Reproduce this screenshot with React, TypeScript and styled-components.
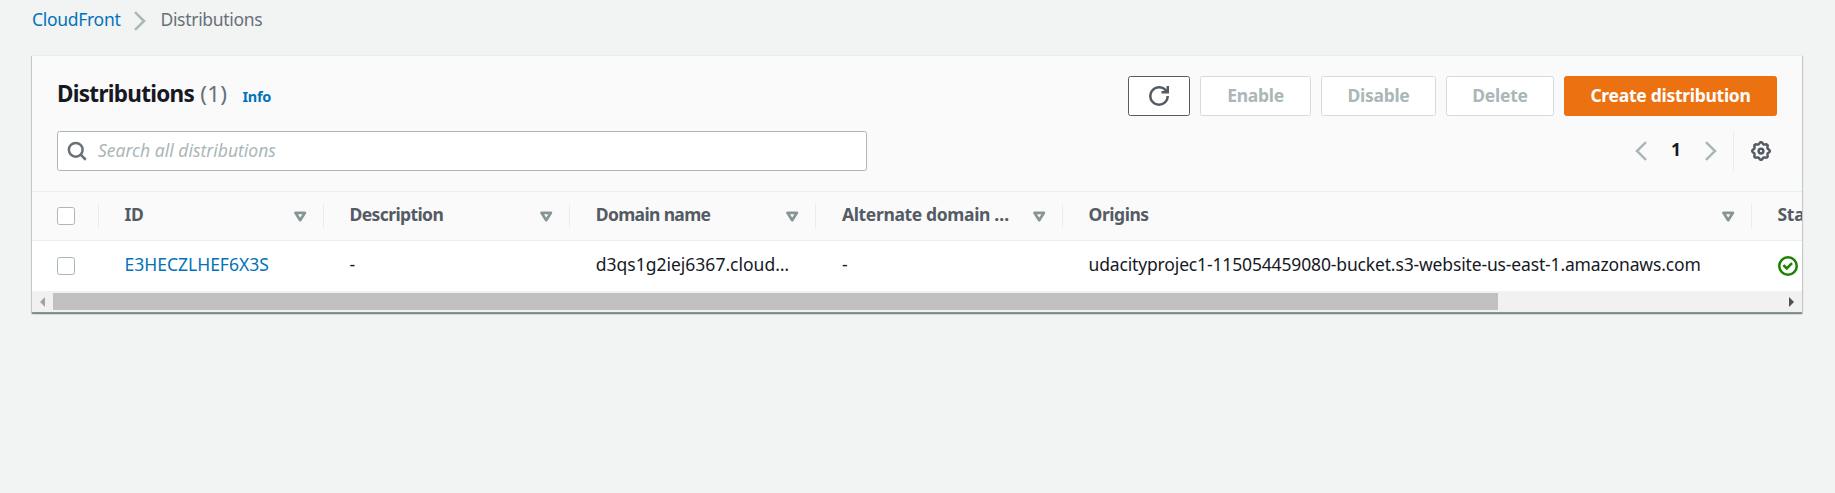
import React from "react";
import styled, { createGlobalStyle, css } from "styled-components";

const GlobalStyle = createGlobalStyle`
  *, *::before, *::after { box-sizing: border-box; }
  body {
    margin: 0;
    background: #f2f3f3;
    color: #16191f;
    font-family: "Noto Sans", "Open Sans", sans-serif;
    font-size: 17.5px;
    line-height: 27.5px;
  }
`;

const Page = styled.div`
  display: flex;
  flex-direction: column;
  gap: 21px;
  padding: 6px 33px 0 32px;
  min-height: 493px;
  background: #f2f3f3;
`;

const Breadcrumbs = styled.nav`
  display: flex;
  align-items: center;
  height: 28px;
  letter-spacing: -0.3px;

  svg { margin: 1px 14px 0 14px; }
`;

const Link = styled.a<{ $tracking?: number }>`
  color: #0073bb;
  text-decoration: none;
  letter-spacing: ${(p) => p.$tracking ?? 0}px;
`;

const Crumb = styled.span`
  color: #687078;
`;

const Panel = styled.section`
  display: flex;
  flex-direction: column;
  width: 1770px;
  height: 258px;
  background: #fff;
  box-shadow: 0 1px 1px 0 rgba(0, 28, 36, 0.3), 1px 1px 1px 0 rgba(0, 28, 36, 0.15),
    -1px 1px 1px 0 rgba(0, 28, 36, 0.15);
  border-bottom: 1px solid #879596;
  border-top: 1px solid #eaeded;
`;

const PanelHeader = styled.header`
  display: flex;
  flex-direction: column;
  gap: 15px;
  height: 135px;
  padding: 20px 25px 0;
  background: #fafafa;
`;

const HeaderRow = styled.div`
  display: flex;
  align-items: center;
  justify-content: space-between;
  height: 40px;
`;

const TitleGroup = styled.div`
  display: flex;
  align-items: baseline;
  gap: 15px;
  margin-top: -2px;
`;

const Title = styled.h2`
  margin: 0;
  font-size: 22.5px;
  font-weight: 700;
  line-height: 30px;
  letter-spacing: -0.72px;
`;

const Counter = styled.span`
  color: #687078;
  font-weight: 400;
  letter-spacing: 0.3px;
  margin-left: 1px;
`;

const InfoLink = styled.a`
  color: #0073bb;
  font-size: 14.5px;
  font-weight: 700;
  letter-spacing: -0.3px;
`;

const Actions = styled.div`
  display: flex;
  gap: 10px;
`;

const Button = styled.button<{ $variant?: "normal" | "primary"; $width: number }>`
  display: flex;
  align-items: center;
  justify-content: center;
  width: ${(p) => p.$width}px;
  height: 40px;
  padding: 0 0 2px;
  border: 1px solid #545b64;
  border-radius: 2.5px;
  background: #fff;
  color: #545b64;
  font: 700 17.5px/25px "Noto Sans", sans-serif;
  letter-spacing: -0.28px;

  svg { margin-top: 2px; }

  &:disabled {
    border-color: #d5dbdb;
    color: #aab7b8;
  }

  ${(p) =>
    p.$variant === "primary" &&
    css`
      border-color: #ec7211;
      background: #ec7211;
      color: #fff;
    `}
`;

const SearchBox = styled.label`
  display: flex;
  align-items: center;
  gap: 11px;
  width: 810px;
  height: 40px;
  padding: 0 9px;
  border: 1px solid #aab7b8;
  border-radius: 2.5px;
  background: #fff;
`;

const SearchInput = styled.input`
  flex: 1;
  padding: 0;
  margin-top: -2px;
  border: 0;
  outline: 0;
  background: transparent;
  font: 17.5px/25px "Noto Sans", sans-serif;

  &::placeholder {
    color: #aab7b8;
    font-style: italic;
    opacity: 1;
  }
`;

const Tools = styled.div`
  display: flex;
  align-items: center;
  height: 40px;
`;

const Pagination = styled.div`
  display: flex;
  align-items: center;
  gap: 24px;
  padding-right: 16px;
`;

const PageNumber = styled.span`
  width: 10px;
  margin-top: -3px;
  text-align: center;
  font-weight: 700;
`;

const Preferences = styled.div`
  display: flex;
  align-items: center;
  height: 40px;
  padding: 0 6px 0 17px;
  border-left: 1px solid #eaeded;
`;

const Table = styled.div`
  width: 1770px;
  overflow: hidden;
`;

const Row = styled.div<{ $head?: boolean }>`
  display: grid;
  grid-template-columns: 66.5px 225px 246.25px 246.25px 246.5px 689px 225px;
  align-items: center;
  width: 1945px;
  height: 50px;

  ${(p) =>
    p.$head &&
    css`
      background: #fafafa;
      border-top: 1px solid #eaeded;
      border-bottom: 1px solid #eaeded;
      color: #545b64;
      font-weight: 700;
    `}
`;

const HeadCell = styled.div`
  display: flex;
  align-items: center;
  justify-content: space-between;
  height: 24px;
  padding: 0 16px 0 26px;
  border-right: 1px solid #eaeded;
`;

const SelectCell = styled.div<{ $divided?: boolean }>`
  display: flex;
  align-items: center;
  height: 24px;
  padding-left: 25px;
  border-right: ${(p) => (p.$divided ? "1px solid #eaeded" : "0")};
`;

const Cell = styled.div`
  display: flex;
  align-items: center;
  padding: 0 26px;
  white-space: nowrap;
`;

const Label = styled.span<{ $tracking?: number }>`
  display: block;
  margin-top: -3px;
  white-space: nowrap;
  letter-spacing: ${(p) => p.$tracking ?? 0}px;
`;

const Checkbox = styled.input`
  appearance: none;
  width: 18px;
  height: 18px;
  margin: 0;
  border: 1px solid #aab7b8;
  border-radius: 2.5px;
  background: #fff;
`;

const ScrollTrack = styled.div`
  display: flex;
  align-items: center;
  height: 21px;
  padding: 0 8px;
  background: #f1f1f1;
`;

const ScrollThumb = styled.div`
  width: 1445px;
  height: 17px;
  margin: 0 auto 0 8px;
  background: #c1c1c1;
`;

const Chevron = ({ left = false }: { left?: boolean }) => (
  <svg width="12" height="20" viewBox="0 0 12 20" fill="none" stroke="#aab7b8" strokeWidth="2.5">
    <path d={left ? "M11 1.2 L2 10 L11 18.8" : "M1 1.2 L10 10 L1 18.8"} />
  </svg>
);

const SortIcon = () => (
  <svg width="13" height="11" viewBox="0 0 13 11" fill="none" stroke="#879596" strokeWidth="2.7" strokeLinejoin="round">
    <path d="M1.5 1.8H10.9L6.2 9.2Z" />
  </svg>
);

const RefreshIcon = () => (
  <svg width="20" height="20" viewBox="0 0 16 16" fill="none" stroke="#545b64" strokeWidth="2">
    <path d="M10 5h5V0" />
    <path d="M15 8a6.957 6.957 0 0 1-7 7 6.957 6.957 0 0 1-7-7 6.957 6.957 0 0 1 7-7 6.87 6.87 0 0 1 6.3 4" />
  </svg>
);

const SearchIcon = () => (
  <svg width="20" height="20" viewBox="0 0 16 16" fill="none" stroke="#687078" strokeWidth="2">
    <circle cx="7" cy="7" r="5.5" />
    <path d="m15 15-4.5-4.5" />
  </svg>
);

const gearOutline = Array.from({ length: 96 }, (_, i) => {
  const angle = (i / 96) * Math.PI * 2;
  const radius = 6.35 + 0.7 * Math.cos(8 * angle);
  return `${(8 + radius * Math.cos(angle)).toFixed(2)},${(8 + radius * Math.sin(angle)).toFixed(2)}`;
}).join(" ");

const GearIcon = () => (
  <svg width="20" height="20" viewBox="0 0 16 16" fill="none" stroke="#545b64" strokeWidth="2" strokeLinejoin="round">
    <polygon points={gearOutline} />
    <circle cx="8" cy="8" r="1.9" />
  </svg>
);

const SuccessIcon = () => (
  <svg width="20" height="20" viewBox="0 0 16 16" fill="none" stroke="#1d8102" strokeWidth="2">
    <circle cx="8" cy="8" r="7" />
    <path d="m5 8 2 2 3.521-3.521" strokeLinecap="square" />
  </svg>
);

const Arrow = ({ left = false }: { left?: boolean }) => (
  <svg width="5" height="10" viewBox="0 0 5 10" fill={left ? "#a3a3a3" : "#505050"}>
    <path d={left ? "M5 0V10L0 5Z" : "M0 0V10L5 5Z"} />
  </svg>
);

const columns = [
  { name: "ID", tracking: -0.3 },
  { name: "Description", tracking: -0.6 },
  { name: "Domain name", tracking: -0.65 },
  { name: "Alternate domain …", tracking: -0.36 },
  { name: "Origins", tracking: -0.45 },
];

export default function App() {
  return (
    <>
      <GlobalStyle />
      <Page>
        <Breadcrumbs>
          <Link $tracking={-0.3}>CloudFront</Link>
          <Chevron />
          <Crumb>Distributions</Crumb>
        </Breadcrumbs>
        <Panel>
          <PanelHeader>
            <HeaderRow>
              <TitleGroup>
                <Title>
                  Distributions <Counter>(1)</Counter>
                </Title>
                <InfoLink>Info</InfoLink>
              </TitleGroup>
              <Actions>
                <Button $width={62} aria-label="Refresh"><RefreshIcon /></Button>
                <Button $width={111} disabled>Enable</Button>
                <Button $width={115} disabled>Disable</Button>
                <Button $width={108} disabled>Delete</Button>
                <Button $width={213} $variant="primary">Create distribution</Button>
              </Actions>
            </HeaderRow>
            <HeaderRow>
              <SearchBox>
                <SearchIcon />
                <SearchInput placeholder="Search all distributions" />
              </SearchBox>
              <Tools>
                <Pagination>
                  <Chevron left />
                  <PageNumber>1</PageNumber>
                  <Chevron />
                </Pagination>
                <Preferences><GearIcon /></Preferences>
              </Tools>
            </HeaderRow>
          </PanelHeader>
          <Table>
            <Row $head>
              <SelectCell $divided><Checkbox type="checkbox" /></SelectCell>
              {columns.map((c) => (
                <HeadCell key={c.name}>
                  <Label $tracking={c.tracking}>{c.name}</Label>
                  <SortIcon />
                </HeadCell>
              ))}
              <HeadCell><Label $tracking={-0.3}>Sta</Label></HeadCell>
            </Row>
            <Row>
              <SelectCell><Checkbox type="checkbox" /></SelectCell>
              <Cell><Label><Link>E3HECZLHEF6X3S</Link></Label></Cell>
              <Cell><Label>-</Label></Cell>
              <Cell><Label>d3qs1g2iej6367.cloud…</Label></Cell>
              <Cell><Label>-</Label></Cell>
              <Cell>
                <Label $tracking={-0.15}>
                  udacityprojec1-115054459080-bucket.s3-website-us-east-1.amazonaws.com
                </Label>
              </Cell>
              <Cell><SuccessIcon /></Cell>
            </Row>
          </Table>
          <ScrollTrack>
            <Arrow left />
            <ScrollThumb />
            <Arrow />
          </ScrollTrack>
        </Panel>
      </Page>
    </>
  );
}
